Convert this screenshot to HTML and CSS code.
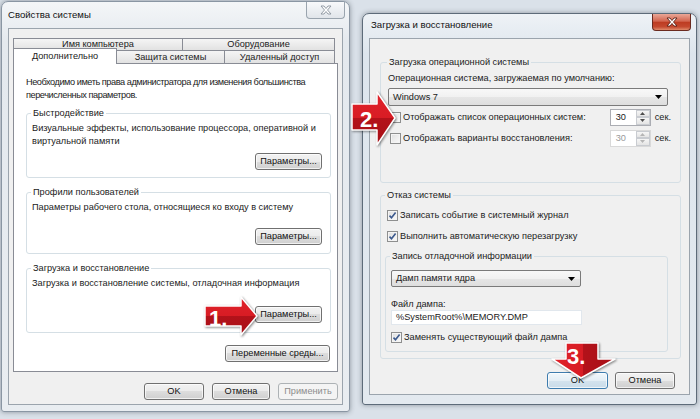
FILE: index.html
```html
<!DOCTYPE html>
<html lang="ru">
<head>
    <meta charset="UTF-8">
    <title>Свойства системы</title>
    <link rel="stylesheet" href="styles.css">
</head>
<body>
    <div class="desk">
        <div class="win win-sys">
            <div class="titlebar">
                <span class="title">Свойства системы</span>
                <span class="close close-idle">
                    <svg width="12" height="10" viewBox="0 0 12 10"><path d="M1 1h3l2 2.5L8 1h3L7.5 5 11 9H8L6 6.5 4 9H1l3.5-4z"/></svg>
                </span>
            </div>
            <div class="client">
                <div class="tab-row back">
                    <div class="tab">Имя компьютера</div>
                    <div class="tab">Оборудование</div>
                </div>
                <div class="tab-row front">
                    <div class="tab active">Дополнительно</div>
                    <div class="tab">Защита системы</div>
                    <div class="tab">Удаленный доступ</div>
                </div>
                <div class="panel">
                    <p class="intro">Необходимо иметь права администратора для изменения большинства<br>перечисленных параметров.</p>
                    <fieldset class="group g1">
                        <legend>Быстродействие</legend>
                        <p>Визуальные эффекты, использование процессора, оперативной и<br>виртуальной памяти</p>
                        <button class="btn btn-params">Параметры...</button>
                    </fieldset>
                    <fieldset class="group g2">
                        <legend>Профили пользователей</legend>
                        <p>Параметры рабочего стола, относящиеся ко входу в систему</p>
                        <button class="btn btn-params">Параметры...</button>
                    </fieldset>
                    <fieldset class="group g3">
                        <legend>Загрузка и восстановление</legend>
                        <p>Загрузка и восстановление системы, отладочная информация</p>
                        <button class="btn btn-params">Параметры...</button>
                    </fieldset>
                    <button class="btn btn-env">Переменные среды...</button>
                </div>
                <div class="dlg-buttons">
                    <button class="btn btn-w60">OK</button>
                    <button class="btn btn-w58">Отмена</button>
                    <button class="btn btn-w60" disabled>Применить</button>
                </div>
            </div>
        </div>

        <div class="win win-boot">
            <div class="titlebar">
                <span class="title">Загрузка и восстановление</span>
                <span class="close close-hot">
                    <svg width="12" height="10" viewBox="0 0 12 10"><path d="M1 1h3l2 2.5L8 1h3L7.5 5 11 9H8L6 6.5 4 9H1l3.5-4z"/></svg>
                </span>
            </div>
            <div class="client">
                <fieldset class="group ga">
                    <legend>Загрузка операционной системы</legend>
                    <div class="lbl">Операционная система, загружаемая по умолчанию:</div>
                    <div class="combo combo-os">
                        <span>Windows 7</span>
                        <svg class="caret" width="7" height="4" viewBox="0 0 7 4"><path d="M0 0h7L3.5 4z"/></svg>
                    </div>
                    <div class="row row-first">
                        <span class="cb"></span>
                        <span class="row-text">Отображать список операционных систем:</span>
                        <span class="spin">
                            <span class="spin-val">30</span>
                            <span class="spin-btns">
                                <span><svg width="5" height="3" viewBox="0 0 5 3"><path d="M0 3h5L2.5 0z"/></svg></span>
                                <span><svg width="5" height="3" viewBox="0 0 5 3"><path d="M0 0h5L2.5 3z"/></svg></span>
                            </span>
                        </span>
                        <span class="sec">сек.</span>
                    </div>
                    <div class="row">
                        <span class="cb"></span>
                        <span class="row-text">Отображать варианты восстановления:</span>
                        <span class="spin off">
                            <span class="spin-val">30</span>
                            <span class="spin-btns">
                                <span><svg width="5" height="3" viewBox="0 0 5 3"><path d="M0 3h5L2.5 0z"/></svg></span>
                                <span><svg width="5" height="3" viewBox="0 0 5 3"><path d="M0 0h5L2.5 3z"/></svg></span>
                            </span>
                        </span>
                        <span class="sec">сек.</span>
                    </div>
                </fieldset>

                <fieldset class="group gb">
                    <legend>Отказ системы</legend>
                    <div class="row row-first">
                        <span class="cb on"><svg width="9" height="9" viewBox="0 0 9 9"><path d="M1.5 4.6l2 2.2L7.6 1.6"/></svg></span>
                        <span class="row-text">Записать событие в системный журнал</span>
                    </div>
                    <div class="row">
                        <span class="cb on"><svg width="9" height="9" viewBox="0 0 9 9"><path d="M1.5 4.6l2 2.2L7.6 1.6"/></svg></span>
                        <span class="row-text">Выполнить автоматическую перезагрузку</span>
                    </div>
                    <fieldset class="group gc">
                        <legend>Запись отладочной информации</legend>
                        <div class="combo combo-dump">
                            <span>Дамп памяти ядра</span>
                            <svg class="caret" width="7" height="4" viewBox="0 0 7 4"><path d="M0 0h7L3.5 4z"/></svg>
                        </div>
                        <div class="lbl lbl-file">Файл дампа:</div>
                        <div class="field">%SystemRoot%\MEMORY.DMP</div>
                        <div class="row row-replace">
                            <span class="cb on"><svg width="9" height="9" viewBox="0 0 9 9"><path d="M1.5 4.6l2 2.2L7.6 1.6"/></svg></span>
                            <span class="row-text">Заменять существующий файл дампа</span>
                        </div>
                    </fieldset>
                </fieldset>

                <div class="dlg-buttons">
                    <button class="btn btn-default btn-w61">OK</button>
                    <button class="btn btn-w60">Отмена</button>
                </div>
            </div>
        </div>
    </div>

    <!-- red pointer arrows drawn over the dialogs -->
    <svg class="arrows" width="700" height="419" viewBox="0 0 700 419">
        <defs>
            <linearGradient id="headH" x1="0" y1="0" x2="0" y2="1">
                <stop offset="0" stop-color="#e0222a"/>
                <stop offset="0.5" stop-color="#d81c24"/>
                <stop offset="0.5" stop-color="#b3121a"/>
                <stop offset="1" stop-color="#a80f16"/>
            </linearGradient>
            <linearGradient id="headV" x1="0" y1="0" x2="1" y2="0">
                <stop offset="0" stop-color="#e0222a"/>
                <stop offset="0.5" stop-color="#d81c24"/>
                <stop offset="0.5" stop-color="#b3121a"/>
                <stop offset="1" stop-color="#a80f16"/>
            </linearGradient>
        </defs>
        <g class="arrow">
            <polygon fill="url(#headH)" points="205,306 241,306 241,297 257,316 241,335 241,326 205,326"/>
            <text x="209" y="326">1.</text>
        </g>
        <g class="arrow">
            <polygon fill="url(#headH)" points="352,104 377,104 377,92 395,118 377,145 377,130 352,130"/>
            <text x="360" y="127">2.</text>
        </g>
        <g class="arrow">
            <polygon fill="url(#headV)" points="566,343 598,343 598,359 615,359 581,378 552,359 566,359"/>
            <text x="567" y="364">3.</text>
        </g>
    </svg>
</body>
</html>
```

FILE: styles.css
```css
* {
    box-sizing: border-box;
}
body {
    margin: 0;
    width: 700px;
    height: 419px;
    overflow: hidden;
    position: relative;
    background: #dae1e9;
    font-family: "Liberation Sans", Arial, sans-serif;
    font-size: 9.2px;
    line-height: 13px;
    color: #1b1b1b;
}
.desk {
    display: flex;
    align-items: flex-start;
    gap: 12px;
    padding: 1px 0 0 1px;
}

/* window frames */
.win {
    display: flex;
    flex-direction: column;
    padding: 0 6px 6px;
    border: 1px solid #8a96a3;
    border-radius: 7px 7px 3px 3px;
    background: linear-gradient(#f4f6f8, #e4e9ee 40px, #e9edf1);
    box-shadow: 0 0 5px rgba(40, 50, 60, 0.45);
}
.win-sys {
    width: 349px;
    height: 411px;
}
.win-boot {
    width: 335px;
    height: 392px;
    margin-top: 12px;
    padding-bottom: 9px;
    border-color: #5d6b79;
    background: linear-gradient(#eef2f6, #dde5ed 40px, #e3e9ef);
}
.titlebar {
    display: flex;
    align-items: flex-start;
    flex: none;
}
.win-sys .titlebar {
    height: 26px;
}
.win-boot .titlebar {
    height: 24px;
}
.title {
    font-size: 9.6px;
    line-height: 14px;
    color: #111;
}
.win-sys .title {
    padding-top: 6px;
}
.win-boot .title {
    padding: 4px 0 0 2px;
}
.close {
    margin-left: auto;
    width: 39px;
    height: 17px;
    display: flex;
    align-items: center;
    justify-content: center;
    border: 1px solid;
    border-top: none;
    border-radius: 0 0 4px 4px;
}
.close-idle {
    margin-right: -2px;
    border-color: #9aa4ae;
    background: linear-gradient(#f8f9fb, #e1e5ea);
}
.close-idle path {
    fill: #fff;
    stroke: #8a939d;
    stroke-width: 0.9;
}
.close-hot {
    margin-right: -1px;
    border-color: #6a2a1f;
    background: linear-gradient(#eaa797, #d2654f 45%, #bd3c22 52%, #c4492f 80%, #e08c6c);
}
.close-hot path {
    fill: #fff;
    stroke: #5a1f14;
    stroke-width: 0.9;
}

/* client area */
.client {
    flex: 1;
    display: flex;
    flex-direction: column;
    border: 1px solid #9ba4ad;
    background: #f0f0f0;
}
.win-sys .client {
    padding: 9px 4px 0 4px;
}
.win-boot .client {
    padding: 16px 8px 0 10px;
}

/* tabs */
.tab-row {
    display: grid;
    align-items: start;
}
.tab-row.back {
    grid-template-columns: 170px 152px;
}
.tab-row.front {
    grid-template-columns: 104px 108px 110px;
}
.tab {
    text-align: center;
    border: 1px solid #898c95;
    border-bottom: none;
    background: linear-gradient(#f5f5f5, #e2e2e2);
    color: #1b1b1b;
}
.tab + .tab {
    border-left: none;
}
.back .tab {
    height: 12px;
    line-height: 11px;
}
.front .tab {
    height: 13px;
    line-height: 12px;
}
.front .tab.active {
    position: relative;
    z-index: 1;
    height: 16px;
    margin: -2px 0 -1px;
    line-height: 14px;
    background: #fff;
}
.panel {
    height: 309px;
    display: flex;
    flex-direction: column;
    padding: 12px 6px 0 12px;
    border: 1px solid #898c95;
    background: #fff;
}
.intro {
    margin: 0;
    white-space: nowrap;
    letter-spacing: -0.45px;
}

/* group boxes */
.group {
    display: block;
    min-width: 0;
    margin: 0;
    border: 1px solid #d5dfe5;
    border-radius: 3px;
}
.group legend {
    padding: 0 2px;
    margin-left: -1px;
    line-height: 14px;
}
.group p {
    margin: 0;
    white-space: nowrap;
}
.panel .group {
    flex: none;
    padding: 2px 8px 0 5px;
}
.g1 {
    height: 72px;
    margin-top: 4px;
}
.g2 {
    height: 69px;
    margin-top: 7px;
}
.g3 {
    height: 72px;
    margin-top: 7px;
}
.panel .group .btn {
    display: block;
    margin-left: auto;
}
.g1 .btn {
    margin-top: 5px;
}
.g2 .btn {
    margin-top: 14px;
}
.g3 .btn {
    margin-top: 16px;
}

/* buttons */
.btn {
    height: 17px;
    padding: 0;
    font: inherit;
    line-height: 15px;
    color: #111;
    border: 1px solid #707070;
    border-radius: 3px;
    background: linear-gradient(#f2f2f2, #ebebeb 50%, #dddddd 50%, #cfcfcf);
    box-shadow: inset 0 0 0 1px rgba(255, 255, 255, 0.7);
}
.btn:disabled {
    color: #8d8d8d;
    border-color: #adb2b5;
    background: #f4f4f4;
    box-shadow: none;
}
.btn-default {
    border-color: #3e7cae;
    background: linear-gradient(#f1f7fb, #e4eef5 50%, #d4e3ee 50%, #cadce9);
}
.btn-params {
    width: 67px;
}
.btn-env {
    flex: none;
    width: 105px;
    margin: 12px 1px 0 0;
    align-self: flex-end;
}
.btn-w58 {
    width: 58px;
}
.btn-w60 {
    width: 60px;
}
.btn-w61 {
    width: 61px;
}
.dlg-buttons {
    display: flex;
    justify-content: flex-end;
    gap: 8px;
    margin-top: 11px;
}
.win-boot .dlg-buttons {
    gap: 7px;
    margin-top: 13px;
    padding-right: 6px;
}

/* boot dialog */
.ga {
    width: 301px;
    height: 128px;
    padding: 2px 9px 0 7px;
}
.lbl {
    line-height: 14px;
}
.combo {
    display: flex;
    align-items: center;
    padding: 0 5px 0 4px;
    border: 1px solid #7a7a7a;
    border-radius: 2px;
    background: linear-gradient(#f8f8f8, #f1f1f1 50%, #e6e6e6 50%, #dedede);
}
.combo .caret {
    margin-left: auto;
}
.combo-os {
    width: 280px;
    height: 18px;
    margin-top: 3px;
}
.row {
    display: flex;
    align-items: center;
    height: 18px;
    margin-top: 3px;
}
.row-first {
    margin-top: 2px;
}
.cb {
    flex: none;
    width: 11px;
    height: 11px;
    margin: 0 2px 0 2px;
    display: flex;
    align-items: center;
    justify-content: center;
    border: 1px solid #8e8f8f;
    background: linear-gradient(135deg, #dedede, #fbfbfb);
    box-shadow: inset 0 0 0 1px #f4f4f4;
}
.cb path {
    fill: none;
    stroke: #3d5a8e;
    stroke-width: 1.6;
}
.row-text {
    flex: 1;
}
.spin {
    display: flex;
    width: 41px;
    height: 17px;
    border: 1px solid #abadb3;
    background: #fff;
}
.spin-val {
    flex: 1;
    padding-left: 5px;
    line-height: 15px;
}
.spin-btns {
    display: flex;
    flex-direction: column;
    width: 14px;
}
.spin-btns span {
    flex: 1;
    display: flex;
    align-items: center;
    justify-content: center;
    border: 1px solid #c9ccd1;
    background: linear-gradient(#f6f6f6, #e4e4e4);
}
.spin-btns path {
    fill: #4d4d4d;
}
.spin.off {
    border-color: #d9d9d9;
    color: #9a9a9a;
}
.spin.off .spin-btns path {
    fill: #b5b5b5;
}
.sec {
    margin-left: 4px;
}
.gb {
    width: 301px;
    height: 171px;
    margin-top: 5px;
    padding: 2px 12px 0 5px;
}
.gb .cb {
    margin-left: 1px;
}
.gc {
    width: 283px;
    height: 103px;
    margin: 4px 0 0 -1px;
    padding: 0 5px;
}
.gc .cb {
    margin-left: 0;
}
.combo-dump {
    width: 190px;
    height: 17px;
    margin-top: 7px;
}
.lbl-file {
    margin-top: 11px;
    line-height: 12px;
}
.field {
    width: 191px;
    height: 15px;
    padding: 0 4px;
    line-height: 13px;
    border: 1px solid #e1e7ed;
    background: #fff;
}
.row-replace {
    margin-top: 3px;
}

/* pointer arrows */
.arrows {
    position: absolute;
    top: 0;
    left: 0;
    pointer-events: none;
}
.arrow polygon {
    stroke: #fff;
    stroke-width: 1.5;
    stroke-linejoin: round;
    filter: drop-shadow(1px 1px 1px rgba(0, 0, 0, 0.45));
}
.arrow text {
    font-family: "Liberation Sans", sans-serif;
    font-weight: bold;
    font-size: 22px;
    fill: #fff;
}
```
